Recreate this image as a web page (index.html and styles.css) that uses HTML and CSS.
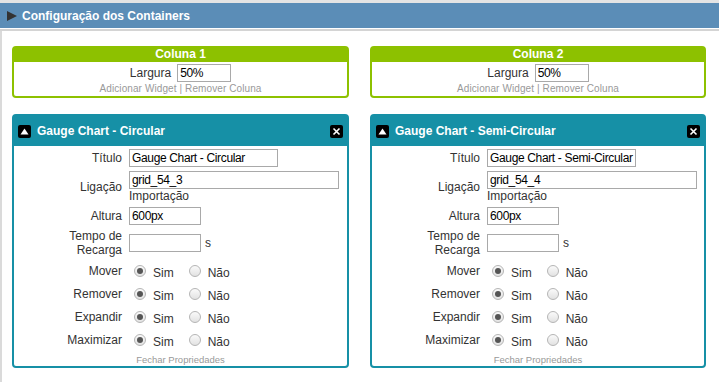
FILE: index.html
```html
<!DOCTYPE html>
<html lang="pt">
<head>
<meta charset="utf-8">
<title>Configuração dos Containers</title>
<link rel="stylesheet" href="styles.css">
</head>
<body>
<div class="topstripe"></div>
<div class="page">
  <div class="mainbar"><span class="arrow"></span><span class="maintitle">Configuração dos Containers</span></div>
  <div class="sep"></div>
  <div class="columns">
    <div class="col">
      <div class="colbox">
        <div class="colhead">Coluna 1</div>
        <div class="colrow"><span class="collabel">Largura</span><input class="inp w-small" type="text" value="50%"></div>
        <div class="collinks">Adicionar Widget | Remover Coluna</div>
      </div>
      <div class="widget">
        <div class="whead">
          <span class="iconbox"><svg width="13" height="13" viewBox="0 0 13 13"><rect width="13" height="13" rx="2" fill="#000"/><path d="M2.5 9.5 L6.5 3.5 L10.5 9.5 Z" fill="#fff"/></svg></span>
          <span class="wtitle">Gauge Chart - Circular</span>
          <span class="closebox"><svg width="13" height="13" viewBox="0 0 13 13"><rect width="13" height="13" rx="2" fill="#000"/><path d="M3.5 3.5 L9.5 9.5 M9.5 3.5 L3.5 9.5" stroke="#fff" stroke-width="1.6"/></svg></span>
        </div>
        <div class="wbody">
          <div class="form">
            <div class="lbl">Título</div><div class="fld"><input class="inp w-title" type="text" value="Gauge Chart - Circular"></div>
            <div class="lbl">Ligação</div><div class="fld"><input class="inp w-long" type="text" value="grid_54_3"><div class="sub">Importação</div></div>
            <div class="lbl">Altura</div><div class="fld"><input class="inp w-mid" type="text" value="600px"></div>
            <div class="lbl two">Tempo de<br>Recarga</div><div class="fld row"><input class="inp w-mid" type="text" value=""><span class="unit">s</span></div>
            <div class="lbl r">Mover</div><div class="fld radios"><span class="rad on"></span><span class="rt">Sim</span><span class="rad"></span><span class="rt">Não</span></div>
            <div class="lbl r">Remover</div><div class="fld radios"><span class="rad on"></span><span class="rt">Sim</span><span class="rad"></span><span class="rt">Não</span></div>
            <div class="lbl r">Expandir</div><div class="fld radios"><span class="rad on"></span><span class="rt">Sim</span><span class="rad"></span><span class="rt">Não</span></div>
            <div class="lbl r">Maximizar</div><div class="fld radios"><span class="rad on"></span><span class="rt">Sim</span><span class="rad"></span><span class="rt">Não</span></div>
          </div>
          <div class="close">Fechar Propriedades</div>
        </div>
      </div>
    </div>
    <div class="col">
      <div class="colbox">
        <div class="colhead">Coluna 2</div>
        <div class="colrow"><span class="collabel">Largura</span><input class="inp w-small" type="text" value="50%"></div>
        <div class="collinks">Adicionar Widget | Remover Coluna</div>
      </div>
      <div class="widget">
        <div class="whead">
          <span class="iconbox"><svg width="13" height="13" viewBox="0 0 13 13"><rect width="13" height="13" rx="2" fill="#000"/><path d="M2.5 9.5 L6.5 3.5 L10.5 9.5 Z" fill="#fff"/></svg></span>
          <span class="wtitle">Gauge Chart - Semi-Circular</span>
          <span class="closebox"><svg width="13" height="13" viewBox="0 0 13 13"><rect width="13" height="13" rx="2" fill="#000"/><path d="M3.5 3.5 L9.5 9.5 M9.5 3.5 L3.5 9.5" stroke="#fff" stroke-width="1.6"/></svg></span>
        </div>
        <div class="wbody">
          <div class="form">
            <div class="lbl">Título</div><div class="fld"><input class="inp w-title" type="text" value="Gauge Chart - Semi-Circular"></div>
            <div class="lbl">Ligação</div><div class="fld"><input class="inp w-long" type="text" value="grid_54_4"><div class="sub">Importação</div></div>
            <div class="lbl">Altura</div><div class="fld"><input class="inp w-mid" type="text" value="600px"></div>
            <div class="lbl two">Tempo de<br>Recarga</div><div class="fld row"><input class="inp w-mid" type="text" value=""><span class="unit">s</span></div>
            <div class="lbl r">Mover</div><div class="fld radios"><span class="rad on"></span><span class="rt">Sim</span><span class="rad"></span><span class="rt">Não</span></div>
            <div class="lbl r">Remover</div><div class="fld radios"><span class="rad on"></span><span class="rt">Sim</span><span class="rad"></span><span class="rt">Não</span></div>
            <div class="lbl r">Expandir</div><div class="fld radios"><span class="rad on"></span><span class="rt">Sim</span><span class="rad"></span><span class="rt">Não</span></div>
            <div class="lbl r">Maximizar</div><div class="fld radios"><span class="rad on"></span><span class="rt">Sim</span><span class="rad"></span><span class="rt">Não</span></div>
          </div>
          <div class="close">Fechar Propriedades</div>
        </div>
      </div>
    </div>
  </div>
</div>
</body>
</html>
```
FILE: styles.css
```css
* { box-sizing: border-box; }
html, body { margin: 0; padding: 0; background: #fff; }
body {
  font-family: Arial, "Liberation Sans", sans-serif;
  font-size: 12px;
  color: #333;
  width: 719px;
  height: 382px;
  overflow: hidden;
}
.topstripe { height: 3px; background: #e4e4e4; }
.page {
  border-left: 2px solid #dadada;
  height: 379px;
}
.mainbar {
  height: 25px;
  background: #5b8db7;
  display: flex;
  align-items: center;
  padding-left: 7px;
  margin-left: -2px;
}
.arrow {
  width: 0; height: 0;
  border-top: 5px solid transparent;
  border-bottom: 5px solid transparent;
  border-left: 10px solid #333;
  margin-right: 5px;
}
.maintitle { color: #fff; font-weight: bold; font-size: 12px; }
.sep { height: 3px; border-top: 1px solid #fff; border-bottom: 2px solid #d4d4d4; margin-left: -2px; }
.columns {
  display: grid;
  grid-template-columns: 337px 336px;
  column-gap: 21px;
  padding: 15px 0 0 10px;
}
.colbox {
  border: 2px solid #8dc100;
  border-radius: 4px;
  height: 52px;
}
.colhead {
  background: #8dc100;
  color: #fff;
  font-weight: bold;
  text-align: center;
  height: 14px;
  line-height: 12px;
}
.colrow {
  display: flex;
  justify-content: center;
  align-items: center;
  padding-top: 2px;
  height: 20px;
}
.collabel { margin-right: 6px; }
.collinks {
  text-align: center;
  font-size: 10px;
  color: #999;
  line-height: 13px;
  letter-spacing: 0.1px;
}
.inp {
  font-family: Arial, "Liberation Sans", sans-serif;
  font-size: 12px;
  letter-spacing: -0.35px;
  color: #000;
  height: 18px;
  border: 1px solid #a9a9a9;
  padding: 0 1px 0 2px;
  margin: 0;
  background: #fff;
}
.w-small { width: 54px; }
.w-title { width: 149px; }
.w-long { width: 210px; }
.w-mid { width: 72px; }
.widget {
  margin-top: 16px;
  border: 2px solid #1690a6;
  border-radius: 4px;
  height: 254px;
}
.whead {
  background: #1690a6;
  height: 30px;
  display: flex;
  align-items: center;
  padding: 0 4px;
}
.iconbox, .closebox { display: flex; }
.wtitle { color: #fff; font-weight: bold; font-size: 12px; margin-left: 6px; flex: 1; }
.wbody { padding-top: 3px; }
.form {
  display: grid;
  grid-template-columns: 108px 1fr;
  column-gap: 7px;
  row-gap: 4px;
  align-items: center;
}
.lbl { text-align: right; line-height: 14px; }
.lbl.two { line-height: 13.5px; padding-top: 1px; }
.lbl.r { align-self: start; line-height: 14px; padding-top: 3px; }
.fld { display: flex; flex-direction: column; align-items: flex-start; }
.fld.row { flex-direction: row; align-items: center; }
.sub { line-height: 14px; height: 14px; }
.unit { margin-left: 4px; }
.radios { flex-direction: row; align-items: center; height: 19px; padding-top: 1px; }
.rad {
  width: 12px; height: 12px;
  border-radius: 50%;
  border: 1px solid #b5b5b5;
  background: linear-gradient(#fafafa, #e2e2e2);
  margin-left: 5px;
  display: flex; align-items: center; justify-content: center;
}
.rad + .rt { margin-left: 7px; padding-top: 4px; }
.rt:nth-child(2) { margin-right: 10px; }
.rad.on::after {
  content: "";
  width: 6px; height: 6px;
  border-radius: 50%;
  background: #555;
}
.close {
  text-align: center;
  font-size: 9.5px;
  color: #999;
  margin-top: 4px;
  line-height: 14px;
}
```
